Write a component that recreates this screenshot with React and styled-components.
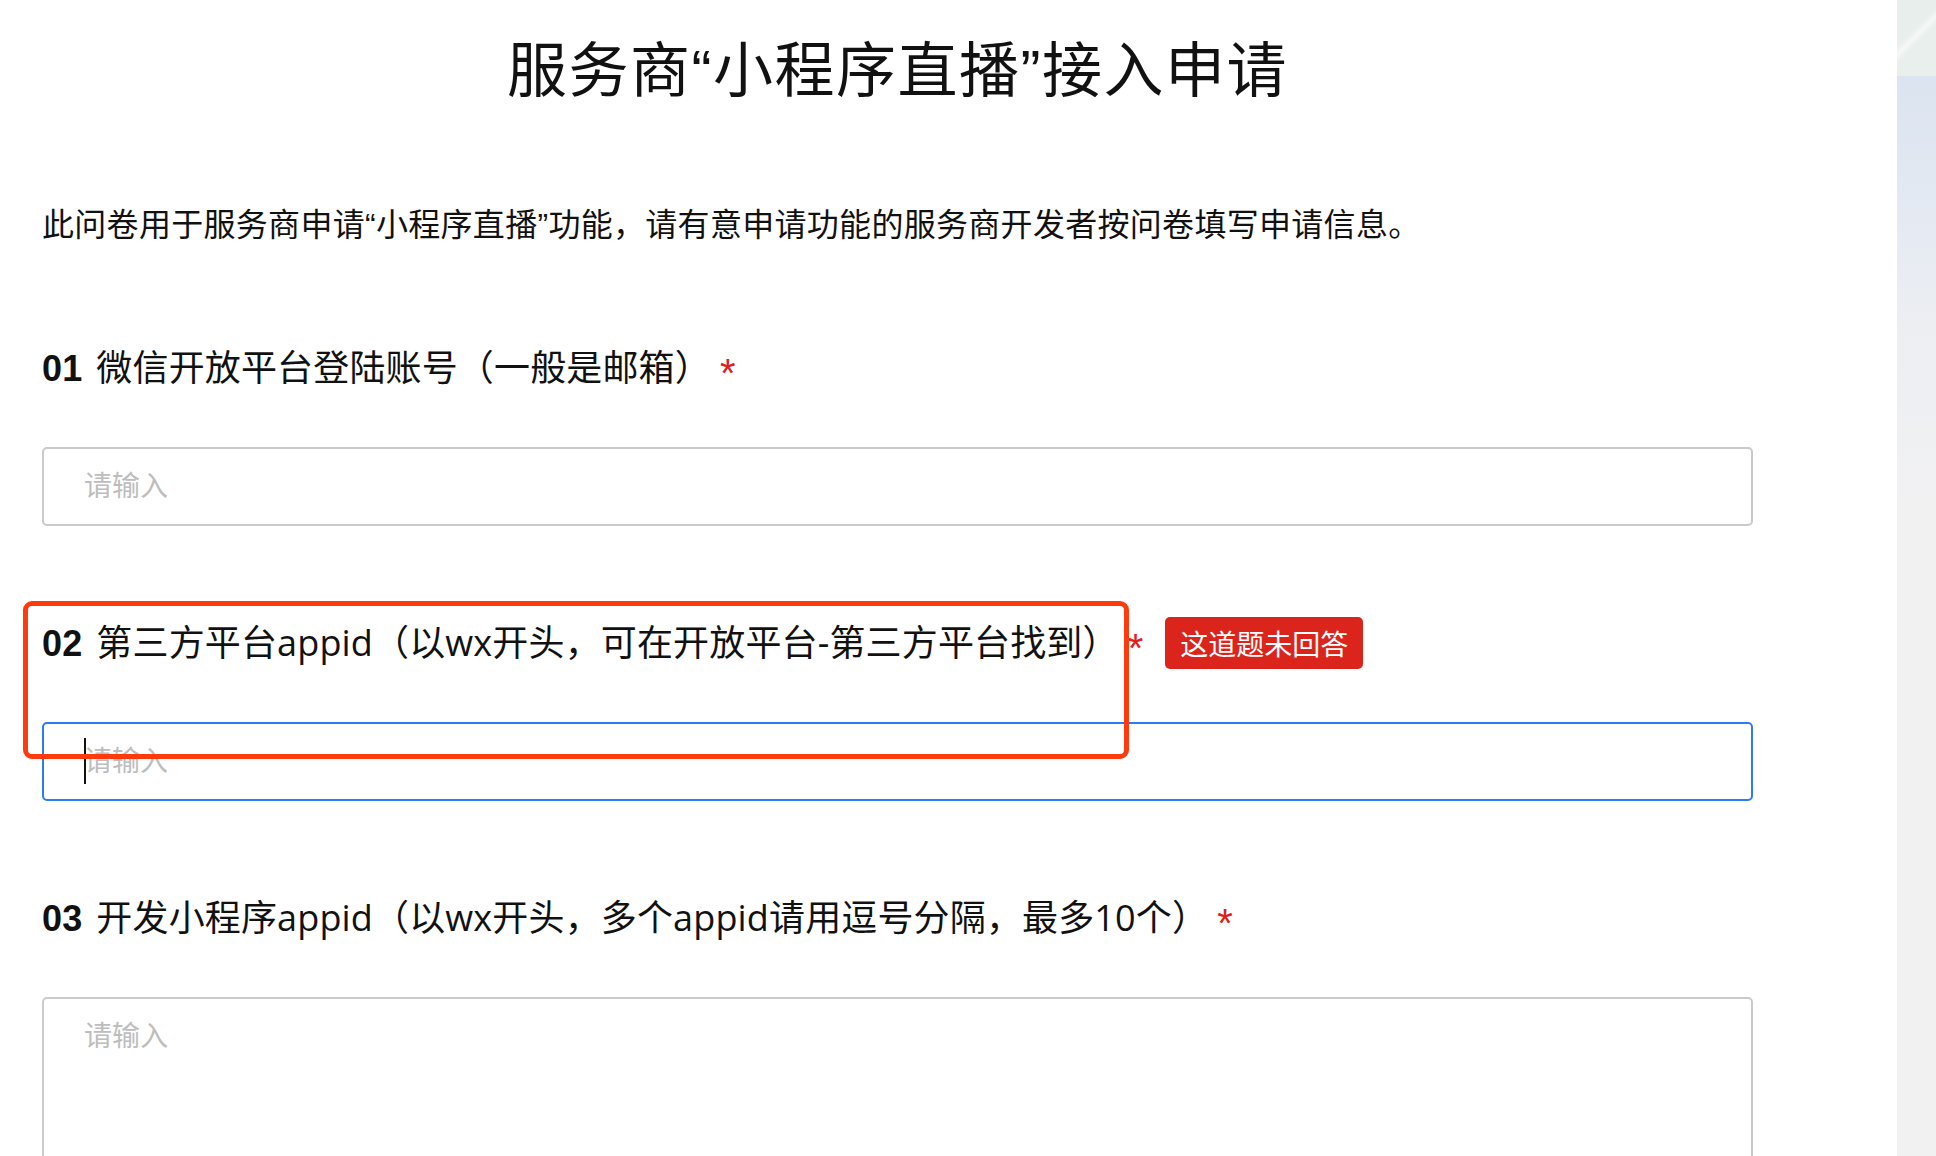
import React from 'react';
import styled, { createGlobalStyle } from 'styled-components';

const GlobalStyle = createGlobalStyle`
  html, body {
    margin: 0;
    padding: 0;
    background: #ffffff;
  }
  body {
    font-family: "Liberation Sans", "Noto Sans CJK SC", sans-serif;
    color: #111111;
  }
`;

const questions = [
  { no: '01', title: '微信开放平台登陆账号（一般是邮箱）', kind: 'input' },
  {
    no: '02',
    title: '第三方平台appid（以wx开头，可在开放平台-第三方平台找到）',
    kind: 'input',
    focused: true,
    error: '这道题未回答',
  },
  { no: '03', title: '开发小程序appid（以wx开头，多个appid请用逗号分隔，最多10个）', kind: 'textarea' },
];

function App() {
  return (
    <>
      <GlobalStyle />
      <Page>
        <Main>
          <Content>
            <PageTitle>服务商“小程序直播”接入申请</PageTitle>
            <Intro>此问卷用于服务商申请“小程序直播”功能，请有意申请功能的服务商开发者按问卷填写申请信息。</Intro>

            {questions.map((q) => (
              <Question key={q.no}>
                <LabelRow>
                  <Label>
                    <Num>{q.no}</Num>
                    {q.title}
                  </Label>
                  <Star>*</Star>
                  {q.error && <ErrorTag>{q.error}</ErrorTag>}
                </LabelRow>
                {q.kind === 'textarea' ? (
                  <TextBox>
                    <Placeholder>请输入</Placeholder>
                  </TextBox>
                ) : (
                  <InputBox $focused={q.focused}>
                    {q.focused && <Caret />}
                    <Placeholder>请输入</Placeholder>
                  </InputBox>
                )}
                {q.error && <Highlight />}
              </Question>
            ))}
          </Content>
        </Main>
        <Side />
      </Page>
    </>
  );
}

const Page = styled.div`
  display: flex;
  min-height: 1156px;
  overflow: hidden;
`;

const Main = styled.div`
  width: 1897px;
  flex-shrink: 0;
  background: #ffffff;
`;

const Side = styled.div`
  flex: 1;
  background:
    linear-gradient(135deg, transparent 40%, rgba(255, 255, 255, 0.55) 48%, transparent 56%) 0 0 / 100% 76px no-repeat,
    linear-gradient(180deg, #e7eeeb 0px, #e9efed 76px, #dbe4f0 76px, #e2e8f2 180px, #eceef2 320px, #f1f1f2 500px, #f1f1f2 100%);
`;

const Content = styled.div`
  width: 1753px;
  padding: 32px 0 0 42px;
  box-sizing: border-box;
`;

const PageTitle = styled.h1`
  margin: 0;
  font-size: 60px;
  line-height: 80px;
  font-weight: 400;
  letter-spacing: 1.5px;
  text-align: center;
  color: #111;
`;

const Intro = styled.p`
  margin: 91px 0 0;
  font-size: 32px;
  line-height: 44px;
  letter-spacing: 0.3px;
  color: #111;
`;

const Question = styled.div`
  position: relative;
  margin-top: 96px;

  & + & {
    margin-top: 92px;
  }
`;

const LabelRow = styled.div`
  display: flex;
  align-items: center;
  height: 50px;
`;

const Label = styled.span`
  font-family: "Open Sans", "Noto Sans CJK SC", sans-serif;
  font-size: 36px;
  line-height: 50px;
  letter-spacing: 0.15px;
  color: #111;
`;

const Num = styled.b`
  font-family: "Liberation Sans", sans-serif;
  font-weight: 700;
  margin-right: 14px;
`;

const Star = styled.span`
  color: #e0201c;
  font-size: 40px;
  line-height: 50px;
  margin-left: 9px;
  padding-top: 10px;
`;

const ErrorTag = styled.span`
  display: inline-flex;
  align-items: center;
  height: 52px;
  margin-left: 22px;
  padding: 0 15px;
  border-radius: 5px;
  background: #db241c;
  color: #ffffff;
  font-size: 28px;
`;

const InputBox = styled.div`
  position: relative;
  display: flex;
  align-items: center;
  margin-top: 54px;
  height: 79px;
  box-sizing: border-box;
  padding-left: 40px;
  border: 2px solid ${({ $focused }) => ($focused ? '#2a7cf6' : '#cacaca')};
  border-radius: 5px;
`;

const TextBox = styled(InputBox)`
  align-items: flex-start;
  height: 240px;
  padding-top: 16px;
`;

const Placeholder = styled.span`
  font-size: 28px;
  line-height: 44px;
  color: #bdbdbd;
`;

const Caret = styled.i`
  position: absolute;
  left: 40px;
  top: 14px;
  width: 2px;
  height: 46px;
  background: #111;
`;

const Highlight = styled.div`
  position: absolute;
  left: -19px;
  top: -17px;
  width: 1106px;
  height: 158px;
  box-sizing: border-box;
  border: 5px solid #ff3a0c;
  border-radius: 9px;
  pointer-events: none;
`;

export default App;
